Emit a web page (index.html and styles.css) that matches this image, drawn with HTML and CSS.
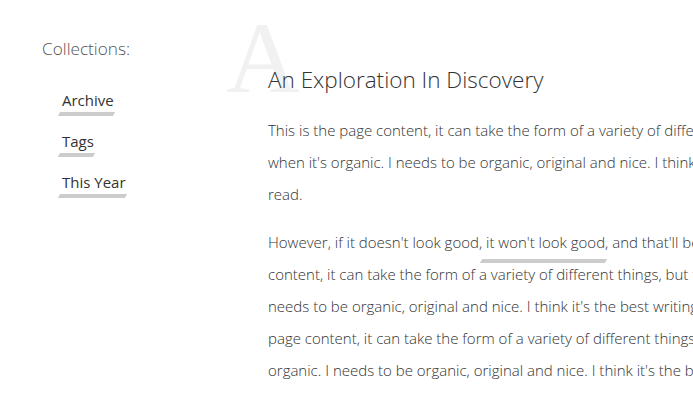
FILE: index.html
```html
<!DOCTYPE html>
<html lang="en">
<head>
<meta charset="utf-8">
<title>An Exploration In Discovery</title>
<link rel="stylesheet" href="styles.css">
</head>
<body>
<div class="page">
  <aside class="sidebar">
    <h2 class="sidebar-title">Collections:</h2>
    <ul class="nav">
      <li><a class="mark" href="#">Archive</a></li>
      <li><a class="mark" href="#">Tags</a></li>
      <li><a class="mark" href="#">This Year</a></li>
    </ul>
  </aside>
  <main class="content">
    <header class="title-wrap">
      <span class="dropletter" aria-hidden="true">A</span>
      <h1 class="title">An Exploration In Discovery</h1>
    </header>
    <p class="para">This is the page content, it can take the form of a variety of different things, but it always looks best<br>when it's organic. I needs to be organic, original and nice. I think it's the best writing of all time to<br>read.</p>
    <p class="para">However, if it doesn't look good, <a class="mark" href="#">it won't look good</a>, and that'll be the end of it. This is the page<br>content, it can take the form of a variety of different things, but the best when it's organic. I<br>needs to be organic, original and nice. I think it's the best writing of all time to read. This is the<br>page content, it can take the form of a variety of different things, but it looks best when it's<br>organic. I needs to be organic, original and nice. I think it's the best writing of all time to read.</p>
  </main>
</div>
</body>
</html>
```

FILE: styles.css
```css
html, body {
  margin: 0;
  padding: 0;
  background: #ffffff;
  overflow: hidden;
}
body {
  font-family: "Open Sans", "Noto Sans", sans-serif;
  font-weight: 300;
  color: #333333;
}
.page {
  display: flex;
  width: 1300px;
}
.sidebar {
  width: 268px;
  flex: 0 0 268px;
  padding: 35px 0 0 42px;
  box-sizing: border-box;
}
.sidebar-title {
  margin: 0;
  font-size: 17.2px;
  font-weight: 300;
  line-height: 28px;
  color: #555555;
}
.nav {
  list-style: none;
  margin: 25px 0 0 0;
  padding: 0 0 0 20px;
  display: flex;
  flex-direction: column;
  gap: 17px;
}
.nav li {
  line-height: 24px;
  font-size: 15px;
  font-weight: 400;
}
.mark {
  position: relative;
  color: #333333;
  text-decoration: none;
  display: inline-block;
}
.mark::after {
  content: "";
  position: absolute;
  left: -3px;
  right: 0;
  bottom: -4px;
  height: 4px;
  background: #cccccc;
  transform: skewX(-30deg);
}
.content {
  flex: 1 1 auto;
  padding-top: 63px;
}
.title-wrap {
  position: relative;
}
.dropletter {
  position: absolute;
  left: -42px;
  top: -56px;
  font-family: "Liberation Serif", "Times New Roman", serif;
  font-size: 102px;
  line-height: 1;
  color: #f1f1f1;
  z-index: 0;
}
.title {
  position: relative;
  z-index: 1;
  margin: 0;
  font-size: 22.5px;
  font-weight: 300;
  line-height: 34px;
  color: #333333;
}
.para {
  margin: 17px 0 0 0;
  font-size: 15px;
  line-height: 32px;
  white-space: nowrap;
}
.para + .para {
  margin-top: 16px;
}
.para .mark::after {
  left: -5px;
  right: -1px;
  bottom: -5px;
  height: 4px;
}
.para .mark {
  font-weight: 300;
}
```
